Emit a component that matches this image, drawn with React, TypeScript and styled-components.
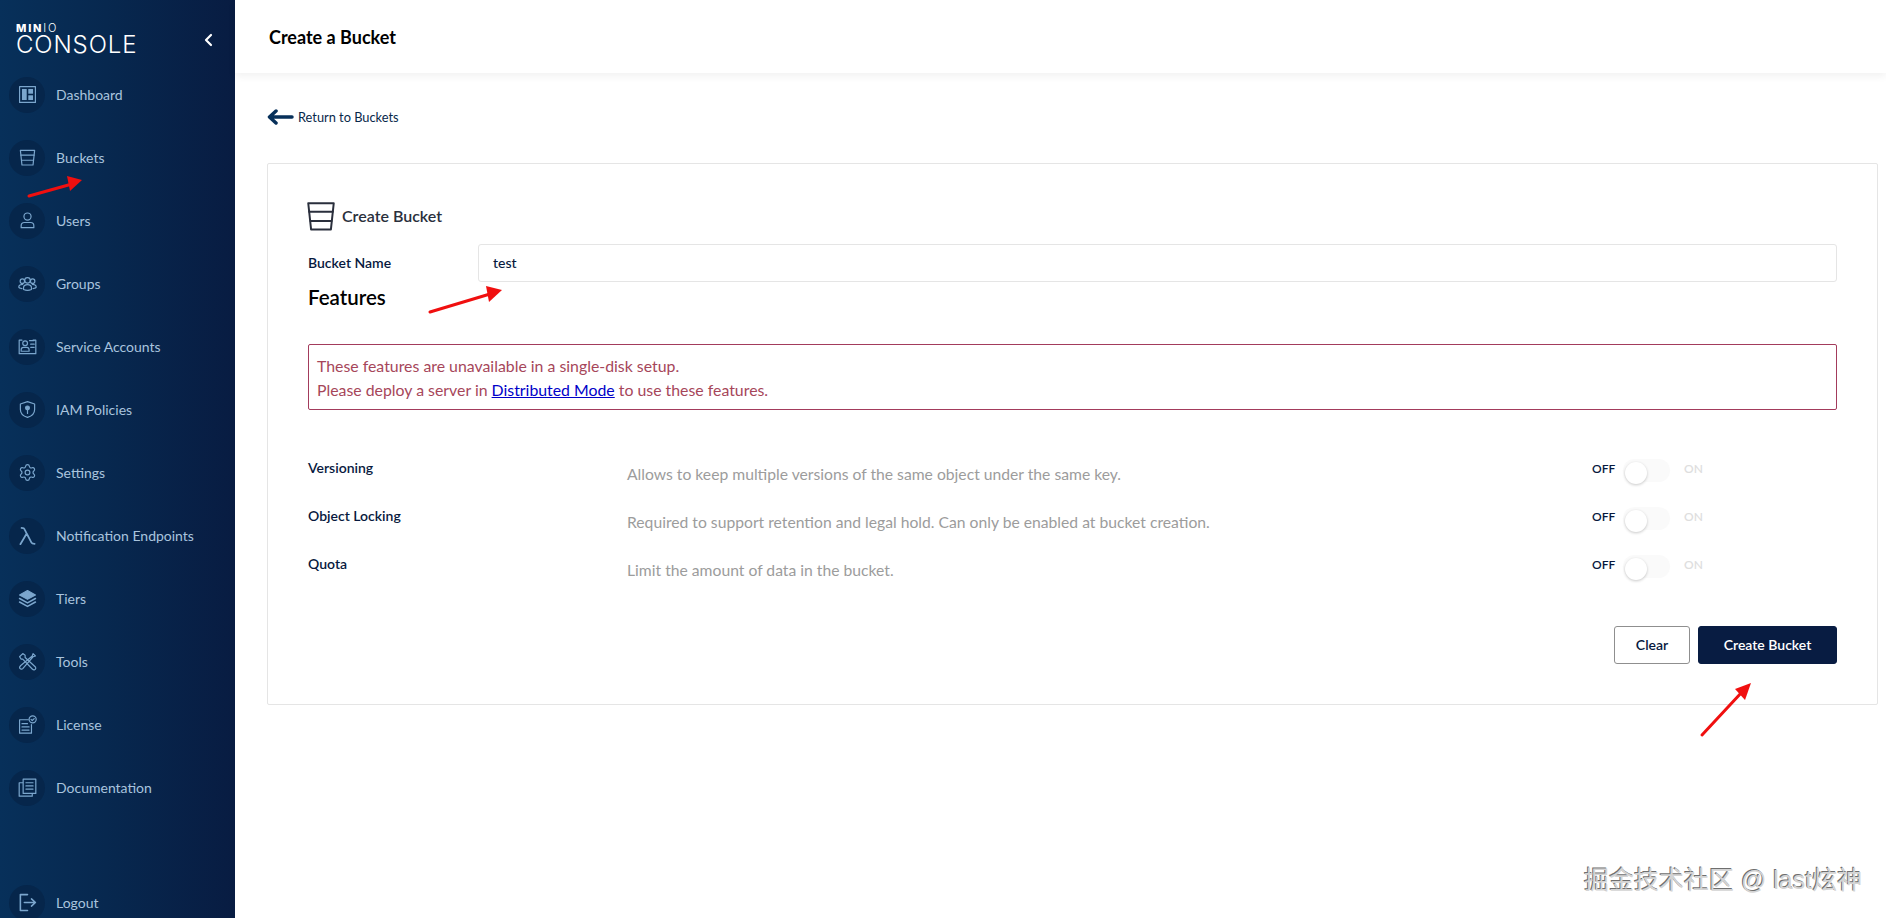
import React from 'react';
import styled, { createGlobalStyle } from 'styled-components';
import { Settings } from 'lucide-react';

const GlobalStyle = createGlobalStyle`
  html, body {
    margin: 0;
    padding: 0;
    height: 100%;
    background: #fff;
    font-family: 'Lato', 'Noto Sans', sans-serif;
  }
  * { box-sizing: border-box; }
`;

const Page = styled.div`
  position: relative;
  display: flex;
  width: 100%;
  height: 100vh;
  overflow: hidden;
`;

const Sidebar = styled.aside`
  flex: 0 0 235px;
  height: 100%;
  overflow: hidden;
  background: linear-gradient(90deg, #07305a 0%, #07284f 45%, #081c42 100%);
`;

const Brand = styled.div`
  display: flex;
  align-items: center;
  justify-content: space-between;
  height: 63px;
  padding: 17px 22px 0 16px;
`;

const Logo = styled.div`
  display: flex;
  flex-direction: column;
  color: #fff;
`;

const LogoTop = styled.span`
  font-family: 'Inter', sans-serif;
  font-size: 11px;
  line-height: 10px;
  font-weight: 800;
  letter-spacing: 1.8px;

  i {
    font-style: normal;
    font-weight: 300;
  }
`;

const LogoName = styled.span`
  font-family: 'Inter', sans-serif;
  font-size: 24px;
  line-height: 24px;
  font-weight: 300;
  letter-spacing: 0.9px;
`;

const NavItem = styled.div<{ $gap?: number }>`
  display: flex;
  align-items: center;
  gap: 11px;
  height: 63px;
  padding-left: 9px;
  margin-top: ${({ $gap }) => $gap ?? 0}px;
  color: #a9c4de;
  font-size: 14px;
`;

const IconDisc = styled.span`
  display: flex;
  align-items: center;
  justify-content: center;
  width: 36px;
  height: 36px;
  border-radius: 50%;
  background: #06264b;
  color: #7ba6cd;
`;

const Main = styled.main`
  flex: 1;
  min-width: 0;
  display: flex;
  flex-direction: column;
`;

const Header = styled.header`
  display: flex;
  align-items: center;
  height: 73px;
  padding-left: 34px;
  box-shadow: 0 3px 8px rgba(0, 0, 0, 0.06);
  color: #000;
  font-size: 18px;
  font-weight: 700;
`;

const BackRow = styled.div`
  display: flex;
  align-items: center;
  gap: 4px;
  height: 16px;
  margin: 36px 0 38px 32px;
  color: #07274a;
  font-size: 12.8px;
`;

const Card = styled.section`
  margin: 0 8px 0 32px;
  height: 542px;
  padding: 39px 40px 0;
  border: 1px solid #e5e5e5;
  border-radius: 2px;
`;

const CardTitle = styled.div`
  display: flex;
  align-items: center;
  gap: 8px;
  height: 26px;
  padding-bottom: 1px;
  color: #2a2f3c;
  font-size: 16px;
  font-weight: 600;
`;

const TitleIcon = styled.span`
  display: flex;
  justify-content: center;
  align-items: center;
  width: 26px;
  height: 26px;
  color: #2a2f3c;
`;

const NameRow = styled.div`
  display: grid;
  grid-template-columns: 170px 1fr;
  align-items: center;
  margin-top: 15px;
`;

const FieldLabel = styled.label`
  padding-bottom: 2px;
  color: #07193e;
  font-size: 14px;
  font-weight: 600;
`;

const NameInput = styled.div`
  display: flex;
  align-items: center;
  height: 38px;
  padding: 0 0 2px 14px;
  border: 1px solid #e5e5e5;
  border-radius: 3px;
  color: #07193e;
  font-size: 14px;
  font-weight: 500;
`;

const FeaturesTitle = styled.h2`
  margin: 0;
  height: 30px;
  line-height: 30px;
  color: #000;
  font-size: 20.500px;
  font-weight: 600;
`;

const Alert = styled.div`
  margin-top: 32px;
  height: 66px;
  padding: 9px 8px;
  border: 1px solid #a33b5c;
  border-radius: 2px;
  color: #a6465a;
  font-size: 15.850px;
  line-height: 24px;

  a {
    color: #0000c8;
    text-decoration: underline;
  }
`;

const Features = styled.div`
  margin-top: 43px;
`;

const FeatureRow = styled.div`
  display: grid;
  grid-template-columns: 319px 965px auto;
  height: 48px;
`;

const FeatureName = styled.div`
  color: #07193e;
  font-size: 14px;
  font-weight: 600;
  line-height: 20px;
  margin-top: 5px;
`;

const FeatureText = styled.div`
  color: #9c9c9c;
  font-size: 15.700px;
  line-height: 20px;
  margin-top: 11px;
`;

const ToggleWrap = styled.div`
  display: flex;
  align-items: flex-start;
  padding-top: 6px;
  font-size: 12px;
  line-height: 14px;
`;

const OffLabel = styled.span`
  margin-top: 3px;
  width: 31px;
  color: #07193e;
  font-weight: 600;
`;

const OnLabel = styled.span`
  margin: 3px 0 0 14px;
  color: #dedede;
  font-weight: 600;
`;

const Track = styled.span`
  position: relative;
  display: block;
  width: 47px;
  height: 23px;
  border-radius: 12px;
  background: #fafafa;
`;

const Knob = styled.span`
  position: absolute;
  left: 2px;
  top: 3px;
  width: 22px;
  height: 22px;
  border-radius: 50%;
  background: #fff;
  box-shadow: 0 1px 3px rgba(0, 0, 0, 0.22);
`;

const Actions = styled.div`
  display: flex;
  justify-content: flex-end;
  gap: 8px;
  margin-top: 29px;
`;

const Button = styled.button<{ $primary?: boolean }>`
  height: 38px;
  width: ${({ $primary }) => ($primary ? 139 : 76)}px;
  padding: 0 0 2px;
  border: 1px solid ${({ $primary }) => ($primary ? '#081c42' : '#8f8f8f')};
  border-radius: 3px;
  background: ${({ $primary }) => ($primary ? '#081c42' : '#fff')};
  color: ${({ $primary }) => ($primary ? '#fff' : '#07193e')};
  font-family: inherit;
  font-size: 14px;
  font-weight: 600;
`;

const Annotations = styled.svg`
  position: absolute;
  inset: 0;
  width: 100%;
  height: 100%;
  pointer-events: none;
`;

const Watermark = styled.div`
  position: absolute;
  left: 1584px;
  top: 862px;
  color: #d4d4d4;
  font-family: 'Liberation Sans', 'Noto Sans CJK SC', sans-serif;
  font-size: 25px;
  line-height: 36px;
  white-space: nowrap;
  text-shadow: -1px -1px 0 #6f6f6f;
`;

const Glyph = ({ children, size = 19, weight = 1.5 }: { children: React.ReactNode; size?: number; weight?: number }) => (
  <svg width={size} height={size} viewBox="0 0 24 24" fill="none" stroke="currentColor" strokeWidth={weight} strokeLinecap="round" strokeLinejoin="round" style={{ flex: 'none' }}>
    {children}
  </svg>
);

const BucketShape = () => (
  <>
    <path d="M3 3h18l-2 18.500H5z" />
    <path d="M3.700 9h16.600M4.600 15.500h14.800" />
  </>
);

const navItems: { label: string; icon: React.ReactNode }[] = [
  {
    label: 'Dashboard',
    icon: (
      <>
        <rect x="2" y="2" width="20" height="20" />
        <rect x="5" y="5" width="6" height="14" fill="currentColor" stroke="none" />
        <rect x="13" y="5" width="6" height="6" fill="currentColor" stroke="none" />
        <rect x="13" y="13" width="6" height="6" fill="currentColor" stroke="none" />
      </>
    ),
  },
  { label: 'Buckets', icon: <BucketShape /> },
  {
    label: 'Users',
    icon: (
      <>
        <circle cx="12" cy="7" r="4.500" />
        <path d="M4 21v-2.500c0-2.500 2-4 4-4h8c2 0 4 1.500 4 4V21z" />
      </>
    ),
  },
  {
    label: 'Groups',
    icon: (
      <>
        <circle cx="12" cy="8" r="3.500" />
        <circle cx="5.500" cy="9" r="2.800" />
        <circle cx="18.500" cy="9" r="2.800" />
        <path d="M7 19.500v-2c0-2 2-4 5-4s5 2 5 4v2c-3 1.300-7 1.300-10 0z" />
        <path d="M6 13c-2.500 0-5 1.500-5 3.500 0 1 1.500 1.700 4 1.900M18 13c2.500 0 5 1.500 5 3.500 0 1-1.500 1.700-4 1.900" />
      </>
    ),
  },
  {
    label: 'Service Accounts',
    icon: (
      <>
        <path d="M5 4H1.500v17h21V4H19" />
        <circle cx="9" cy="8" r="3" />
        <path d="M4 18v-2c0-1.500 1.500-3 3-3h4c1.500 0 3 1.500 3 3v2z" />
        <path d="M14.500 4.500h6M16 9h4.500M16 13h4.500" />
      </>
    ),
  },
  {
    label: 'IAM Policies',
    icon: (
      <>
        <path d="M12 2l9 3v7c0 5-4 8.500-9 10-5-1.500-9-5-9-10V5z" />
        <circle cx="12" cy="10" r="2.400" fill="currentColor" />
        <path d="M12 12v5" />
      </>
    ),
  },
  { label: 'Settings', icon: <Settings size={24} strokeWidth={1.5} /> },
  {
    label: 'Notification Endpoints',
    icon: <path d="M3 23L11 9.500 8.500 4.500C8 3 7 2.500 4.500 2.500M11 9.500l6 11.500c.5 1 1.500 1.500 4 1.500" strokeWidth="2.200" />,
  },
  {
    label: 'Tiers',
    icon: (
      <>
        <path d="M12 2l10 5.500-10 5.500L2 7.500z" fill="currentColor" />
        <path d="M2 12l10 5.500L22 12M2 16.500L12 22l10-5.500" strokeWidth="2" />
      </>
    ),
  },
  {
    label: 'Tools',
    icon: (
      <>
        <path d="M2 6l4-4 3 2v3l13 12c1 1.500 0 3-1 3.500-1 .5-2 0-3-1L6 9H4z" />
        <path d="M19 2l3 3-3 1-13 15c-1.500 1.500-4 0-4-1.500 0-1 .5-1.500 1.500-2.500L18 5z" />
      </>
    ),
  },
  {
    label: 'License',
    icon: (
      <>
        <path d="M13 6H2v17h15V12" />
        <path d="M5 11h7M5 15h9M5 19h9" />
        <circle cx="18.500" cy="5.500" r="4.500" />
        <path d="M16.500 5.500l1.500 1.500 2.500-2.500" />
      </>
    ),
  },
  {
    label: 'Documentation',
    icon: (
      <>
        <rect x="6.500" y="1.500" width="16" height="18" />
        <path d="M10 6h9M10 10h9M10 14h9" />
        <path d="M6 6H1.500v17H18v-3" />
      </>
    ),
  },
];

const features = [
  { name: 'Versioning', text: 'Allows to keep multiple versions of the same object under the same key.' },
  { name: 'Object Locking', text: 'Required to support retention and legal hold. Can only be enabled at bucket creation.' },
  { name: 'Quota', text: 'Limit the amount of data in the bucket.' },
];

const App = () => (
  <>
    <GlobalStyle />
    <Page>
      <Sidebar>
        <Brand>
          <Logo>
            <LogoTop>
              MIN<i>IO</i>
            </LogoTop>
            <LogoName>CONSOLE</LogoName>
          </Logo>
          <svg width="10" height="14" viewBox="0 0 10 14" fill="none" stroke="#fff" strokeWidth="2.200" strokeLinecap="round" strokeLinejoin="round">
            <path d="M8 2L3 7l5 5" />
          </svg>
        </Brand>
        <nav>
          {navItems.map((item) => (
            <NavItem key={item.label}>
              <IconDisc>
                <Glyph>{item.icon}</Glyph>
              </IconDisc>
              {item.label}
            </NavItem>
          ))}
          <NavItem $gap={52}>
            <IconDisc>
              <Glyph>
                <path d="M12 2H3v20h9" strokeWidth="2" />
                <path d="M8 12h14M17 7.500l5 4.500-5 4.500" strokeWidth="2" />
              </Glyph>
            </IconDisc>
            Logout
          </NavItem>
        </nav>
      </Sidebar>
      <Main>
        <Header>Create a Bucket</Header>
        <BackRow>
          <svg width="27" height="16" viewBox="0 0 27 16" fill="none" stroke="#07305a" strokeWidth="3.500" strokeLinecap="round" strokeLinejoin="round">
            <path d="M25 8H3M9 2L2.500 8 9 14" />
          </svg>
          Return to Buckets
        </BackRow>
        <Card>
          <CardTitle>
            <TitleIcon>
              <Glyph size={34} weight={1.400}>
                <BucketShape />
              </Glyph>
            </TitleIcon>
            Create Bucket
          </CardTitle>
          <NameRow>
            <FieldLabel>Bucket Name</FieldLabel>
            <NameInput>test</NameInput>
          </NameRow>
          <FeaturesTitle>Features</FeaturesTitle>
          <Alert>
            These features are unavailable in a single-disk setup.
            <br />
            Please deploy a server in <a href="#distributed">Distributed Mode</a> to use these features.
          </Alert>
          <Features>
            {features.map((feature) => (
              <FeatureRow key={feature.name}>
                <FeatureName>{feature.name}</FeatureName>
                <FeatureText>{feature.text}</FeatureText>
                <ToggleWrap>
                  <OffLabel>OFF</OffLabel>
                  <Track>
                    <Knob />
                  </Track>
                  <OnLabel>ON</OnLabel>
                </ToggleWrap>
              </FeatureRow>
            ))}
          </Features>
          <Actions>
            <Button>Clear</Button>
            <Button $primary>Create Bucket</Button>
          </Actions>
        </Card>
      </Main>
      <Annotations viewBox="0 0 1886 918">
        <g fill="none" stroke="#f00f0f" strokeWidth="3" strokeLinecap="round">
          <path d="M29 196L72 184" />
          <path d="M430 312L490 294" />
          <path d="M1702 735L1742 692" />
        </g>
        <g fill="#f00f0f">
          <path d="M82 180L67 176 70 191z" />
          <path d="M502 290L486 286 489 302z" />
          <path d="M1751 683L1735 689 1745 700z" />
        </g>
      </Annotations>
      <Watermark>掘金技术社区 @ last炫神</Watermark>
    </Page>
  </>
);

export default App;
